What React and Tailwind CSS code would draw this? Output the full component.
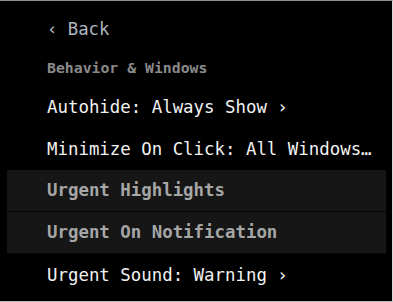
import React from 'react';

const mono = { fontFamily: '"DejaVu Sans Mono", "Liberation Mono", monospace' };

const rows = [
  { label: 'Autohide: Always Show ›', dim: false },
  { label: 'Minimize On Click: All Windows…', dim: false },
  { label: 'Urgent Highlights', dim: true },
  { label: 'Urgent On Notification', dim: true },
  { label: 'Urgent Sound: Warning ›', dim: false },
];

export default function App() {
  return (
    <div
      className="w-[393px] h-[302px] overflow-hidden bg-black border-t border-b border-r border-t-[#8f8f8f] border-b-[#bdbdbd] border-r-[#d8d8d8] flex flex-col px-[7px] pr-[6px]"
      style={mono}
    >
      <div className="h-[42px] mt-[8px] flex items-center pl-[40px] text-[17.3px] text-[#aeb8c2]">
        ‹ Back
      </div>
      <div className="h-[35px] flex items-center pl-[40px] text-[14.8px] font-semibold text-[#8a8a8a]">
        Behavior &amp; Windows
      </div>
      <div className="flex flex-col">
        {rows.map((r, i) => (
          <div
            key={i}
            className={`h-[42px] flex items-center pl-[40px] text-[17.4px] whitespace-nowrap ${
              r.dim
                ? 'bg-[#161616] text-[#a6a6a6] font-semibold border-b border-[#050505]'
                : 'text-[#f2f2f2]'
            }`}
          >
            {r.label}
          </div>
        ))}
      </div>
    </div>
  );
}
